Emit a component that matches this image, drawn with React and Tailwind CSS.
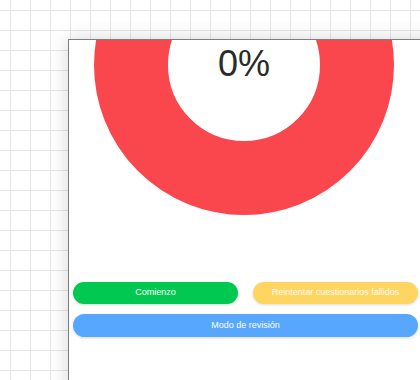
export default function App() {
  return (
    <div className="h-[380px] w-[420px] overflow-hidden bg-white bg-[repeating-linear-gradient(to_right,transparent_0_10px,#e6e6e6_10px_11px,transparent_11px_20px),repeating-linear-gradient(to_bottom,transparent_0_10px,#e6e6e6_10px_11px,transparent_11px_20px)] font-['Liberation_Sans',Arial,sans-serif]">
      <div className="ml-[68px] mt-[39px] h-[400px] w-[420px] border-l border-t border-[#7d7d7d] bg-white shadow-[0_0_18px_rgba(0,0,0,0.16)]">
        <div className="h-[242px] w-[350px]">
          <svg width="350" height="242" viewBox="0 0 350 242">
            <circle cx="175" cy="25" r="113" fill="none" stroke="#fa464d" strokeWidth="74" />
            <text
              x="175"
              y="36"
              textAnchor="middle"
              fontSize="36"
              fill="#2b2b2b"
              fontFamily="'Liberation Sans', Arial, sans-serif"
            >
              0%
            </text>
          </svg>
        </div>
        <div className="flex w-[353px] flex-col gap-[10px] pl-[4px]">
          <div className="flex gap-[15px]">
            <button className="h-[22px] w-[165px] rounded-full bg-[#00c851] text-[9px] text-white shadow-[0_1px_3px_rgba(0,0,0,0.15)]">
              Comienzo
            </button>
            <button className="h-[22px] w-[165px] rounded-full bg-[#ffd561] text-[9px] text-[#fffaf0] shadow-[0_1px_3px_rgba(0,0,0,0.15)]">
              Reintentar cuestionarios fallidos
            </button>
          </div>
          <button className="h-[23px] w-[345px] rounded-full bg-[#58a7ff] text-[9px] text-white shadow-[0_1px_3px_rgba(0,0,0,0.15)]">
            Modo de revisión
          </button>
        </div>
      </div>
    </div>
  );
}
